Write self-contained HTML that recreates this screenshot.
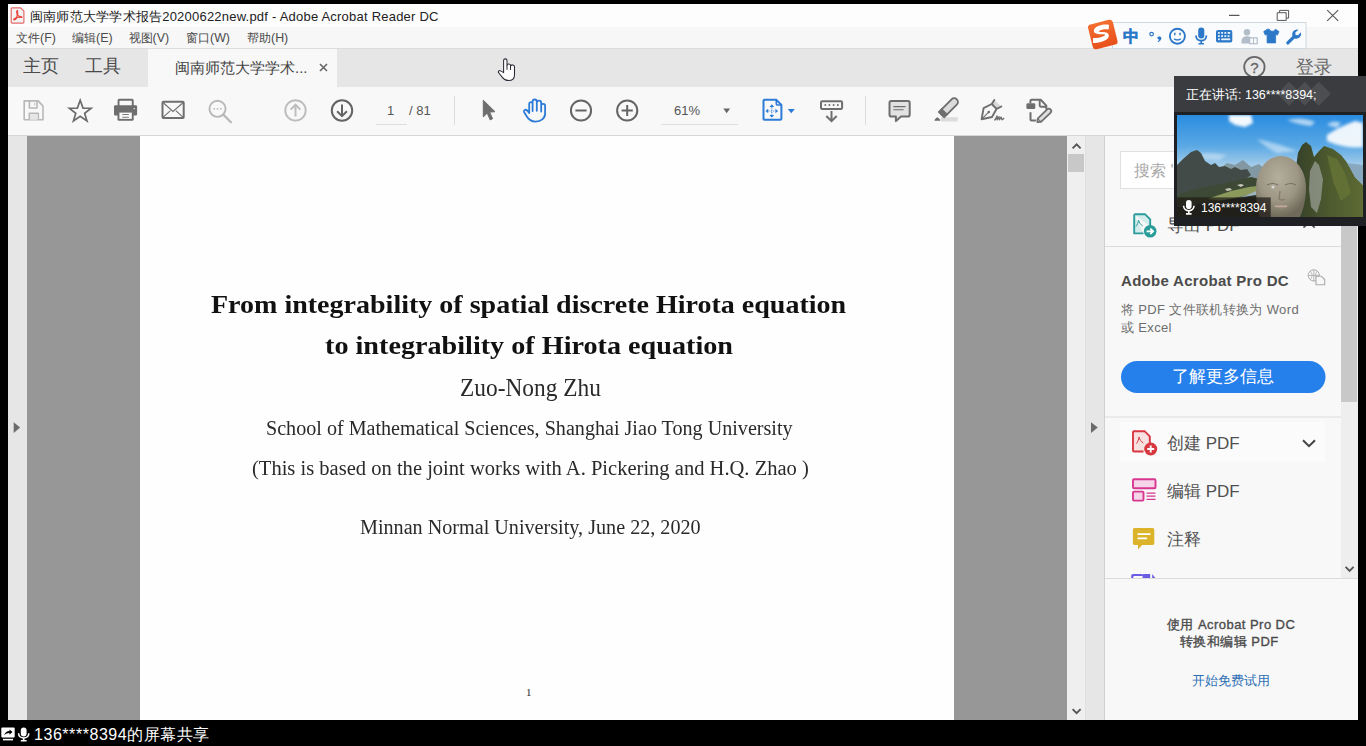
<!DOCTYPE html>
<html><head><meta charset="utf-8">
<style>
*{margin:0;padding:0;box-sizing:border-box}
html,body{width:1366px;height:746px;overflow:hidden;background:#000;font-family:"Liberation Sans",sans-serif;}
.a{position:absolute}
.t{position:absolute;white-space:nowrap;line-height:1}
svg{position:absolute;overflow:visible}
.serif{font-family:"Liberation Serif",serif;color:#1a1a1a}
</style></head><body>
<!-- title bar -->
<div class="a" style="left:8px;top:4px;width:1350px;height:23px;background:#fdfdfd"></div>
<!-- menu bar -->
<div class="a" style="left:8px;top:27px;width:1350px;height:21px;background:#f7f7f7"></div>
<!-- tab bar -->
<div class="a" style="left:8px;top:48px;width:1350px;height:1px;background:#dcdcdc"></div>
<div class="a" style="left:8px;top:49px;width:1350px;height:38px;background:#e6e6e6"></div>
<div class="a" style="left:148px;top:49px;width:189px;height:38px;background:#f8f8f8"></div>
<!-- title text -->
<svg style="left:0;top:0" width="30" height="30" viewBox="0 0 30 30"><path d="M12.2 7.8h8.4l3.3 3.3v11a1 1 0 0 1-1 1H12.2a1 1 0 0 1-1-1V8.8a1 1 0 0 1 1-1z" fill="#f3f3f3" stroke="#e46a6a" stroke-width="1.2"/><path d="M17.4 10.6c-.9 0-1 1.2-.4 3.2.5 1.6.3 2.6-.6 3.6-.8.9-2 1.2-2.6 1.8-.4.4.1.9.9.6 1-.4 1.6-1.4 2.6-2.2.9-.7 1.9-.6 3-.2.9.3 1.9.2 1.7-.4-.2-.5-1.2-.5-2.3-.6-1-.1-1.7-.8-2-2-.3-1.3.3-3.8-.3-3.8z" fill="none" stroke="#e8453c" stroke-width="1.1"/></svg>
<div class="t" style="left:30px;top:9.5px;font-size:13px;color:#222;letter-spacing:.22px">闽南师范大学学术报告20200622new.pdf - Adobe Acrobat Reader DC</div>
<!-- menu -->
<div class="t" style="left:16px;top:31.5px;font-size:12.4px;color:#4a4a4a">文件(F)</div>
<div class="t" style="left:72px;top:31.5px;font-size:12.4px;color:#4a4a4a">编辑(E)</div>
<div class="t" style="left:128.5px;top:31.5px;font-size:12.4px;color:#4a4a4a">视图(V)</div>
<div class="t" style="left:186px;top:31.5px;font-size:12.4px;color:#4a4a4a">窗口(W)</div>
<div class="t" style="left:247px;top:31.5px;font-size:12.4px;color:#4a4a4a">帮助(H)</div>
<!-- tabs -->
<div class="t" style="left:22.5px;top:57.6px;font-size:17.6px;color:#4a4a4a">主页</div>
<div class="t" style="left:84.5px;top:57.6px;font-size:17.6px;color:#4a4a4a">工具</div>
<div class="t" style="left:175px;top:60px;font-size:15px;color:#444">闽南师范大学学术...</div>
<svg style="left:319px;top:63px" width="9" height="9" viewBox="0 0 9 9"><path d="M1 1l7 7M8 1l-7 7" stroke="#666" stroke-width="1.6"/></svg>
<!-- cursor -->
<svg style="left:0;top:0" width="600" height="90" viewBox="0 0 600 90">
 <path d="M503.6 71.8V60.6A1.7 1.7 0 0 1 507 60.6V65.6A1.75 1.75 0 0 1 510.5 66V66.6A1.75 1.75 0 0 1 514.5 67.2V75C514.5 78.5 512 80.5 508.5 80.5C505.5 80.5 504 79.5 502.5 77.6L498.9 73A1.3 1.3 0 0 1 500.6 70.9L503.6 72.6z" fill="#fff" stroke="#2a2a35" stroke-width="1.05" stroke-linejoin="round"/>
 <path d="M507 65.6v4.2M510.5 66.4v3.6" stroke="#2a2a35" stroke-width="1"/>
</svg>
<!-- toolbar -->
<div class="a" style="left:8px;top:87px;width:1350px;height:48px;background:#f8f8f8"></div>
<div class="a" style="left:8px;top:135px;width:1350px;height:1px;background:#d6d6d6"></div>
<!-- window controls -->
<svg style="left:0;top:0" width="1366" height="50" viewBox="0 0 1366 50">
 <rect x="1229" y="14.8" width="10.5" height="1.1" fill="#444"/>
 <path d="M1277.2 12.7h9v7.7h-9z" fill="#fdfdfd" stroke="#555" stroke-width="1"/>
 <path d="M1279.6 12.7v-2.3h9v7.7h-2.4" fill="none" stroke="#555" stroke-width="1"/>
 <path d="M1327.2 10.2l11 10.6M1338.2 10.2l-11 10.6" stroke="#555" stroke-width="1.1"/>
 <!-- sogou bar -->
 <rect x="1112.5" y="22.5" width="193.5" height="26" fill="#f9fbfd" stroke="#cfd7e0" stroke-width="1"/>
 <defs><linearGradient id="sg" x1="0" y1="0" x2="0" y2="1"><stop offset="0" stop-color="#f46d2f"/><stop offset="1" stop-color="#e9501b"/></linearGradient></defs>
 <g transform="translate(1102.8 34.5) rotate(-14) scale(1.08)">
  <rect x="-11.8" y="-11.8" width="23.6" height="23.6" rx="3" fill="url(#sg)"/>
  <path d="M7.8 -7.2c-4-2-11.5-2.4-14.3 .6c-2.6 3 1 5.2 5.8 6.2c3.4.7 3.6 1.6.2 2.1c-2.8.5-6.6.1-9-.7l-1.2 4.4c3.4 1.2 9.4 1.4 12.6.1c4.8-1.9 4.6-6.3-1.2-7.7c-3-.7-4.3-1.1-3.2-1.8c1.6-.9 6.2-.3 8.8.8z" fill="#fff"/>
 </g>
 <text x="1122.8" y="42" font-family="Liberation Sans" font-size="15.5" font-weight="bold" fill="#2b78c8" stroke="#2b78c8" stroke-width=".4">中</text>
 <circle cx="1151.6" cy="34.1" r="1.8" fill="none" stroke="#2b78c8" stroke-width="1.2"/>
 <path d="M1159.3 36.6c1.9 0 2.4 1.1 1.9 2.5-.5 1.4-1.6 2.5-3 3.1l-.5-.8c.8-.5 1.3-1.1 1.5-1.8-1.1-.1-1.8-.8-1.8-1.6 0-.9.8-1.4 1.9-1.4z" fill="#2b78c8"/>
 <circle cx="1177.4" cy="36.2" r="7.5" fill="none" stroke="#2b78c8" stroke-width="1.9"/>
 <rect x="1174.1" y="32.5" width="1.4" height="3" rx=".7" fill="#2b78c8"/><rect x="1179.3" y="32.5" width="1.4" height="3" rx=".7" fill="#2b78c8"/>
 <path d="M1174 38.8c1.8 1.6 5 1.6 6.8 0" fill="none" stroke="#2b78c8" stroke-width="1.3"/>
 <rect x="1198.2" y="27.6" width="6.1" height="11" rx="3" fill="#2b78c8"/>
 <path d="M1196 35.4c0 3.3 2.3 5.2 5.2 5.2s5.2-1.9 5.2-5.2" fill="none" stroke="#2b78c8" stroke-width="1.8"/>
 <path d="M1201.2 40.6v2.6M1198.5 43.8h5.4" stroke="#2b78c8" stroke-width="1.6"/>
 <rect x="1216" y="29.9" width="16.3" height="12.6" rx="2" fill="#2b78c8"/>
 <g fill="#e8f0fa"><rect x="1218" y="32" width="1.8" height="1.8"/><rect x="1221.2" y="32" width="1.8" height="1.8"/><rect x="1224.4" y="32" width="1.8" height="1.8"/><rect x="1227.6" y="32" width="2.6" height="1.8"/>
 <rect x="1218" y="35.2" width="1.8" height="1.8"/><rect x="1221.2" y="35.2" width="1.8" height="1.8"/><rect x="1224.4" y="35.2" width="1.8" height="1.8"/><rect x="1227.6" y="35.2" width="1.8" height="1.8"/>
 <rect x="1218" y="38.4" width="1.8" height="1.8"/><rect x="1221.2" y="38.4" width="9" height="1.8"/></g>
 <circle cx="1247" cy="32.3" r="3.2" fill="#b3bdc9"/>
 <path d="M1241.5 41.5c0-3.5 2.2-5.3 5.5-5.3s5.5 1.8 5.5 5.3v2h-11z" fill="#b3bdc9"/>
 <rect x="1249.7" y="37.9" width="7.5" height="5.8" fill="#f9fbfd" stroke="#b3bdc9" stroke-width="1.2"/>
 <path d="M1253.5 38v6" stroke="#b3bdc9" stroke-width="1"/>
 <path d="M1267.4 29.2l-3.7 2.4 1.6 3.5 1.8-.7v8.5h8.5v-8.5l1.8.7 1.6-3.5-3.7-2.4c-.6 1.4-1.6 2-3 2s-2.4-.6-3-2z" fill="#2b78c8" stroke="#2b78c8" stroke-width=".8" stroke-linejoin="round"/>
 <path d="M1298.5 29.8a5 5 0 0 0-6.2 6.4l-5.6 5.6a1.6 1.6 0 0 0 2.3 2.3l5.6-5.6a5 5 0 0 0 6.4-6.2l-2.9 2.9-2.5-.2-.3-2.5z" fill="#2b78c8"/>
</svg>
<svg style="left:0;top:0" width="1366" height="90" viewBox="0 0 1366 90">
 <circle cx="1254.4" cy="67" r="10.2" fill="none" stroke="#666" stroke-width="1.8"/>
 <text x="1254.4" y="73" text-anchor="middle" font-family="Liberation Sans" font-size="15" fill="#666" stroke="#666" stroke-width=".3">?</text>
</svg>
<div class="t" style="left:1296px;top:58px;font-size:18px;color:#666">登录</div>
<!-- toolbar texts -->
<div class="t" style="left:387px;top:104px;font-size:13px;color:#555">1</div>
<div class="t" style="left:409px;top:104px;font-size:13px;color:#555">/ 81</div>
<div class="t" style="left:674px;top:104px;font-size:13px;color:#555">61%</div>
<!-- toolbar icons -->
<svg style="left:0;top:0" width="1366" height="136" viewBox="0 0 1366 136">
 <!-- save -->
 <g fill="none" stroke="#b8b8b8" stroke-width="1.6" stroke-linejoin="round">
  <path d="M24.2 100.9h14l4.8 5.2v13.7h-18.8z"/>
  <path d="M29.4 100.9v7.1h7.6v-7.1"/>
  <path d="M29.3 119.8v-6.6h9v6.6"/>
 </g>
 <rect x="30" y="114" width="7.6" height="5.8" fill="#e6e6e6"/>
 <rect x="34" y="102.8" width="1.2" height="2.6" fill="#c8c8c8"/>
 <!-- star -->
 <path transform="translate(80.2 110.5) scale(.94) translate(-80.2 -110.5)" d="M80.2 99.6l3 8.3 8.6.2-6.9 5.3 2.5 8.3-7.2-5-7.2 5 2.5-8.3-6.9-5.3 8.6-.2z" fill="none" stroke="#6b6b6b" stroke-width="1.8" stroke-linejoin="miter"/>
 <!-- printer -->
 <g fill="#6e6e6e">
  <path d="M117.6 106v-5.6a1.6 1.6 0 0 1 1.6-1.6h12.9a1.6 1.6 0 0 1 1.6 1.6v5.6h-1.9v-5.3h-12.3v5.3z"/>
  <path d="M115.3 105.3h20.5a1.3 1.3 0 0 1 1.3 1.3v7.6a1.3 1.3 0 0 1-1.3 1.3h-2.1v4.1a1.1 1.1 0 0 1-1.1 1.1h-14a1.1 1.1 0 0 1-1.1-1.1v-4.1h-2.2a1.3 1.3 0 0 1-1.3-1.3v-7.6a1.3 1.3 0 0 1 1.3-1.3z"/>
 </g>
 <rect x="119.4" y="112.6" width="12.4" height="6.3" fill="#f8f8f8"/>
 <rect x="122.3" y="114" width="6.6" height=".9" fill="#6e6e6e"/>
 <rect x="122.3" y="116.8" width="6.6" height=".9" fill="#6e6e6e"/>
 <rect x="133.5" y="108" width="1.4" height="1.2" fill="#ddd"/>
 <!-- mail -->
 <rect x="162.5" y="101.7" width="21.2" height="16.4" rx="1" fill="none" stroke="#6e6e6e" stroke-width="2"/>
 <path d="M163 102.5l10 9 10.2-9M163 117.3l7.4-6.6M183.2 117.3l-7.4-6.6" fill="none" stroke="#6e6e6e" stroke-width="1.1"/>
 <!-- search -->
 <circle cx="217.5" cy="108.8" r="8.1" fill="none" stroke="#b8b8b8" stroke-width="1.9"/>
 <path d="M223.3 114.6l7.6 7.6" stroke="#b8b8b8" stroke-width="2.2" stroke-linecap="round"/>
 <circle cx="214.2" cy="108.8" r=".9" fill="#b8b8b8"/><circle cx="217.5" cy="108.8" r=".9" fill="#b8b8b8"/><circle cx="220.8" cy="108.8" r=".9" fill="#b8b8b8"/>
 <!-- up/down -->
 <circle cx="295.5" cy="110.4" r="10.2" fill="none" stroke="#bdbdbd" stroke-width="1.9"/>
 <path d="M295.5 116.5v-11.5M290.6 109.6l4.9-4.9 4.9 4.9" fill="none" stroke="#bdbdbd" stroke-width="2"/>
 <circle cx="342" cy="110.5" r="10.2" fill="none" stroke="#646464" stroke-width="2"/>
 <path d="M342 104.5v11.5M337.1 111.3l4.9 4.9 4.9-4.9" fill="none" stroke="#646464" stroke-width="2"/>
 <!-- page underline + separators -->
 <rect x="376" y="124" width="31" height="1" fill="#dedede"/>
 <rect x="454" y="96" width="1" height="29" fill="#dcdcdc"/>
 <rect x="661" y="124" width="77" height="1" fill="#dedede"/>
 <rect x="865" y="96" width="1" height="29" fill="#dcdcdc"/>
 <!-- arrow -->
 <path d="M483.3 100.2L495 111.7l-5.4.4 3 6.6-2.4 1.2-3-6.8-3.9 3.9z" fill="#6e6e6e" stroke="#6e6e6e" stroke-width="1" stroke-linejoin="round"/>
 <!-- hand -->
 <path d="M529.2 113V103.8A1.7 1.7 0 0 1 532.6 103.8V111M532.6 103.8V101.6A2.1 2.1 0 0 1 536.8 101.6V110.8M536.8 102.9A2.2 2.2 0 0 1 541.2 102.9V111.5M541.2 105.85A1.95 1.95 0 0 1 545.1 105.85V113.5C545.1 118.5 541 121.6 535.5 121.6C531 121.6 528.5 119.5 526.5 116L524.2 112.3A1.7 1.7 0 0 1 527 110.4L529.2 113" fill="none" stroke="#2c7bd6" stroke-width="1.8" stroke-linecap="round" stroke-linejoin="round"/>
 <!-- minus/plus -->
 <circle cx="581" cy="110.5" r="10.1" fill="none" stroke="#646464" stroke-width="2"/>
 <path d="M575.4 110.5h11.2" stroke="#646464" stroke-width="2"/>
 <circle cx="627.2" cy="110.5" r="10.1" fill="none" stroke="#646464" stroke-width="2"/>
 <path d="M621.6 110.5h11.2M627.2 104.9v11.2" stroke="#646464" stroke-width="2"/>
 <!-- zoom dropdown -->
 <path d="M723.3 108.6h6.8l-3.4 4.6z" fill="#666"/>
 <!-- fit page -->
 <path d="M764.6 99.7h11.6l5.2 5.2v13.8a1.1 1.1 0 0 1-1.1 1.1h-15.7a1.1 1.1 0 0 1-1.1-1.1v-17.9a1.1 1.1 0 0 1 1.1-1.1z" fill="none" stroke="#2c7bd6" stroke-width="2" stroke-linejoin="round"/>
 <path d="M776.3 100v3.8a1.2 1.2 0 0 0 1.2 1.2h3.9" fill="none" stroke="#2c7bd6" stroke-width="1.6"/>
 <path d="M771.8 104.3l-2.3 2.7h4.6zM771.8 117.7l-2.3-2.7h4.6zM765.5 111l2.7-2.3v4.6zM778.1 111l-2.7-2.3v4.6z" fill="#2c7bd6"/>
 <path d="M771.8 107v8M768.2 111h7.2" stroke="#2c7bd6" stroke-width="1.2" stroke-dasharray="1.4 1" opacity=".75"/>
 <path d="M787.8 109h7l-3.5 4.2z" fill="#2c7bd6"/>
 <!-- keyboard download -->
 <rect x="821" y="101.2" width="21.1" height="7.8" rx="1.3" fill="none" stroke="#6e6e6e" stroke-width="2"/>
 <circle cx="825.3" cy="105.1" r="1" fill="#6e6e6e"/><circle cx="829.4" cy="105.1" r="1" fill="#6e6e6e"/><circle cx="833.6" cy="105.1" r="1" fill="#6e6e6e"/><circle cx="837.8" cy="105.1" r="1" fill="#6e6e6e"/>
 <path d="M831.5 111v10M826.3 116l5.2 5.2 5.2-5.2" fill="none" stroke="#6e6e6e" stroke-width="2"/>
 <!-- comment -->
 <path d="M891.3 101.1h16.6a1.8 1.8 0 0 1 1.8 1.8v11.8a1.8 1.8 0 0 1-1.8 1.8h-6.8l-5.2 4.6v-4.6h-4.6a1.8 1.8 0 0 1-1.8-1.8v-11.8a1.8 1.8 0 0 1 1.8-1.8z" fill="#e2e2e2" stroke="#6e6e6e" stroke-width="2" stroke-linejoin="round"/>
 <path d="M893.4 106.6h12.2M893.4 109.8h10.2" stroke="#6e6e6e" stroke-width="1.1"/>
 <!-- highlighter -->
 <rect x="941" y="117.2" width="16.6" height="4.3" fill="#dcdcdc"/>
 <g transform="translate(941.6 114.6) rotate(-45)">
  <rect x="0" y="-3.7" width="21.5" height="7.4" rx="3.7" fill="#dcdcdc" stroke="#6e6e6e" stroke-width="1.9"/>
  <rect x="-1" y="-4.6" width="5.6" height="9.2" fill="#6e6e6e"/>
 </g>
 <path d="M934.4 120.7c.4-1.6 1.8-3.2 3.2-3.4l2.8 2.8-.3.6z" fill="#6e6e6e"/>
 <!-- pen sign -->
 <path d="M994.3 100l7.1 6.5-4.9 1.9-4.7-4.9z" fill="#dadada"/>
 <path d="M994.3 100l-2.5 3.9M991.8 104l4.7 4.9 4.9-2.4" fill="none" stroke="#6e6e6e" stroke-width="1.9" stroke-linecap="round" stroke-linejoin="round"/>
 <path d="M991.8 104L983.6 108.2 981.6 119.2 992 117 996.5 109" fill="none" stroke="#6e6e6e" stroke-width="1.9" stroke-linejoin="round"/>
 <path d="M982 118.8l6.6-6.6" stroke="#6e6e6e" stroke-width="1.1"/>
 <circle cx="988.8" cy="112.1" r="1.3" fill="#6e6e6e"/>
 <path d="M994.8 120c.9-1.2 1.6-2.6 2.2-4.1.3 1.4.2 2.8.1 3.8.8-.9 1.4-2 1.9-3 .1 1 .2 2 .4 3 .7-1 1.2-1.8 1.7-2.6.2 1 .4 1.9 1 2.6.6-.2 1.2-.8 1.6-1.4" fill="none" stroke="#6e6e6e" stroke-width="1.4" stroke-linecap="round" stroke-linejoin="round"/>
 <!-- edit doc -->
 <path d="M1030.4 103.2V101a1.2 1.2 0 0 1 1.2-1.2h9.1l5.6 5.8v3.6" fill="none" stroke="#6e6e6e" stroke-width="2" stroke-linejoin="round"/>
 <path d="M1039.7 100.2v5.3a1.2 1.2 0 0 0 1.2 1.2h5.2" fill="none" stroke="#6e6e6e" stroke-width="1.9"/>
 <rect x="1026.4" y="103.3" width="8.9" height="5.8" rx="1.3" fill="#6e6e6e"/>
 <path d="M1030.5 112.2v7.2a1.1 1.1 0 0 0 1.1 1.1h4.3" fill="none" stroke="#6e6e6e" stroke-width="2"/>
 <g transform="translate(1037.3 122.2) rotate(-44)">
  <path d="M2.8 -2.4h13.2a2.4 2.4 0 0 1 0 4.8H2.8L0 0z" fill="#dedede" stroke="#6e6e6e" stroke-width="1.7" stroke-linejoin="round"/>
  <path d="M2.8 -2.3v4.6" stroke="#6e6e6e" stroke-width="1.1"/>
  <path d="M-.3 0l1.4-1v2z" fill="#6e6e6e"/>
 </g>
</svg>
<!-- content -->
<div class="a" style="left:8px;top:136px;width:19px;height:584px;background:#e6e6e6"></div>
<div class="a" style="left:27px;top:136px;width:1040px;height:584px;background:#979797"></div>
<div class="a" style="left:140px;top:136px;width:814px;height:584px;background:#fefefe"></div>
<!-- pdf text -->
<div class="t serif" style="left:211px;top:292px;font-size:25px;font-weight:bold;color:#111;transform:scaleX(1.121);transform-origin:0 0">From integrability of spatial discrete Hirota equation</div>
<div class="t serif" style="left:325px;top:332.5px;font-size:25px;font-weight:bold;color:#111;transform:scaleX(1.127);transform-origin:0 0">to integrability of Hirota equation</div>
<div class="t serif" style="left:459.5px;top:375.9px;font-size:24.5px;color:#2a2a2a;transform:scaleX(0.954);transform-origin:0 0">Zuo-Nong Zhu</div>
<div class="t serif" style="left:266px;top:417.6px;font-size:20.5px;color:#2a2a2a;transform:scaleX(0.981);transform-origin:0 0">School of Mathematical Sciences, Shanghai Jiao Tong University</div>
<div class="t serif" style="left:252px;top:457.8px;font-size:20.5px;color:#2a2a2a;transform:scaleX(1.002);transform-origin:0 0">(This is based on the joint works with A. Pickering and H.Q. Zhao )</div>
<div class="t serif" style="left:360px;top:516.8px;font-size:20.5px;color:#2a2a2a;transform:scaleX(0.983);transform-origin:0 0">Minnan Normal University, June 22, 2020</div>
<div class="t serif" style="left:526px;top:687px;font-size:11px;color:#2a2a2a">1</div>
<!-- main scrollbar -->
<div class="a" style="left:1067px;top:136px;width:18px;height:584px;background:#efefef"></div>
<div class="a" style="left:1068px;top:154px;width:16px;height:18px;background:#c8c8c8"></div>
<!-- right collapse strip -->
<div class="a" style="left:1085px;top:136px;width:19px;height:584px;background:#e6e6e6"></div>
<div class="a" style="left:1104px;top:136px;width:1px;height:584px;background:#cfcfcf"></div>
<div class="a" style="left:1085px;top:136px;width:1px;height:584px;background:#e0e0e0"></div>
<!-- right panel -->
<div class="a" style="left:1105px;top:136px;width:236px;height:584px;background:#f8f8f8"></div>
<div class="a" style="left:1341px;top:136px;width:17px;height:442px;background:#eeeeee"></div>
<div class="a" style="left:1341px;top:136px;width:16px;height:266px;background:#c8c8c8"></div>
<!-- right panel content -->
<div class="a" style="left:1120px;top:422px;width:205px;height:40px;background:#fbfbfb;border-radius:3px"></div>
<div class="a" style="left:1120px;top:151px;width:240px;height:38px;background:#fff;border:1px solid #e0e0e0"></div>
<div class="t" style="left:1134px;top:163px;font-size:16px;color:#a8a8a8">搜索 '导出</div>
<svg style="left:1105px;top:136px" width="236" height="584" viewBox="1105 136 236 584">
 <!-- export pdf icon -->
 <path d="M1134.2 214.3h11l5 5v7.5M1143.5 233.4h-9.3v-19.1" fill="#d4ecec" stroke="#2a9d9b" stroke-width="1.9" stroke-linejoin="round"/>
 <path d="M1138.5 220c.6 2.5 2 4.6 4.3 6M1138.5 220c-.2 2.6-1.3 5-2.6 6.6" fill="none" stroke="#2a9d9b" stroke-width="1"/>
 <circle cx="1150.2" cy="231.3" r="6.3" fill="#2a9d9b"/>
 <path d="M1146.6 231.3h6M1150.3 228.6l2.8 2.7-2.8 2.7" fill="none" stroke="#fff" stroke-width="1.8"/>
 <path d="M1303.5 227.6l5.6-5.2 5.6 5.2" fill="none" stroke="#555" stroke-width="1.8"/>
 <rect x="1105" y="246" width="236" height="1" fill="#dcdcdc"/>
 <!-- globe doc icon -->
 <circle cx="1313.8" cy="275.4" r="5.6" fill="none" stroke="#aaa" stroke-width="1"/>
 <path d="M1308.3 275.4h11M1313.8 269.8v11.2M1310.5 271.2c2 2.6 2 5.8 0 8.4M1317.1 271.2c-2 2.6-2 5.8 0 8.4" fill="none" stroke="#aaa" stroke-width=".8"/>
 <path d="M1316 276.3h5.5l3.2 3.2v5.2h-8.7z" fill="#f8f8f8" stroke="#aaa" stroke-width="1.1" stroke-linejoin="round"/>
 <!-- button -->
 <rect x="1121" y="361" width="204.5" height="32" rx="16" fill="#2680eb"/>
 <rect x="1105" y="416.5" width="236" height="1" fill="#dcdcdc"/>
 <!-- create pdf icon -->
 <path d="M1143.5 451.5h-9.5a1 1 0 0 1-1-1v-18.2a1 1 0 0 1 1-1h10.8l5 5v7" fill="#f9e0e1" stroke="#d7373f" stroke-width="1.9" stroke-linejoin="round"/>
 <path d="M1139 437c.6 2.5 2 4.6 4.3 6M1139 437c-.2 2.6-1.3 5-2.6 6.6" fill="none" stroke="#d7373f" stroke-width="1"/>
 <circle cx="1150.7" cy="449" r="6.5" fill="#d7373f"/>
 <path d="M1147.2 449h7M1150.7 445.5v7" stroke="#fff" stroke-width="1.9"/>
 <path d="M1303 440.2l6 6 6-6" fill="none" stroke="#444" stroke-width="2"/>
 <!-- edit pdf icon -->
 <rect x="1133" y="479.2" width="22.5" height="9" rx="1" fill="#f5d6e8" stroke="#d83790" stroke-width="1.9"/>
 <rect x="1133" y="491.6" width="10.5" height="9" rx="1" fill="#f5d6e8" stroke="#d83790" stroke-width="1.9"/>
 <path d="M1146.5 493.2h9M1146.5 496.2h9M1146.5 499.3h9" stroke="#d83790" stroke-width="1.2"/>
 <!-- comment icon -->
 <path d="M1134.5 528h18.2a1.6 1.6 0 0 1 1.6 1.6v13.7a1.6 1.6 0 0 1-1.6 1.6h-10.5l-4.2 4.5v-4.5h-3.5a1.6 1.6 0 0 1-1.6-1.6v-13.7a1.6 1.6 0 0 1 1.6-1.6z" fill="#dcb42c"/>
 <path d="M1137.5 534.2h13M1137.5 538.3h9.5" stroke="#fff" stroke-width="1.8"/>
 <!-- partial purple icon -->
 <path d="M1131.2 578.4v-2.6a1.8 1.8 0 0 1 1.8-1.8h8.8l2 2h-9.6a.9.9 0 0 0-.9.9v1.5z" fill="#6b5ce6"/><rect x="1142.6" y="574" width="7.6" height="4.4" fill="#6b5ce6"/><path d="M1152.2 574l3.4 4.4h-3.4z" fill="#6b5ce6"/>
 <rect x="1105" y="578" width="236" height="1" fill="#dcdcdc"/>
</svg>
<div class="t" style="left:1167px;top:216.5px;font-size:17px;color:#505050">导出 PDF</div>
<div class="t" style="left:1121px;top:273px;font-size:15px;font-weight:bold;color:#4b4b4b;letter-spacing:.3px">Adobe Acrobat Pro DC</div>
<div class="t" style="left:1121px;top:302.5px;font-size:13px;color:#6e6e6e;letter-spacing:.35px">将 PDF 文件联机转换为 Word</div>
<div class="t" style="left:1121px;top:321px;font-size:13px;color:#6e6e6e;letter-spacing:.35px">或 Excel</div>
<div class="t" style="left:1172px;top:368px;font-size:17px;color:#fff">了解更多信息</div>
<div class="t" style="left:1167px;top:434.5px;font-size:17px;color:#505050">创建 PDF</div>
<div class="t" style="left:1167px;top:483px;font-size:17px;color:#505050">编辑 PDF</div>
<div class="t" style="left:1167px;top:531px;font-size:17px;color:#505050">注释</div>
<div class="a" style="left:1105px;top:578px;width:253px;height:1px;background:#dcdcdc"></div><div class="a" style="left:1105px;top:579px;width:253px;height:141px;background:#f8f8f8"></div>
<div class="t" style="left:1167px;top:618px;font-size:13px;color:#4b4b4b;-webkit-text-stroke:.35px #4b4b4b;letter-spacing:.45px">使用 Acrobat Pro DC</div>
<div class="t" style="left:1180px;top:635px;font-size:13px;color:#4b4b4b;-webkit-text-stroke:.35px #4b4b4b;letter-spacing:.45px">转换和编辑 PDF</div>
<div class="t" style="left:1191.5px;top:674px;font-size:13px;color:#2d6fb5">开始免费试用</div>
<!-- bottom black bar is body bg -->
<svg style="left:0;top:0" width="1366" height="746" viewBox="0 0 1366 746">
 <path d="M1345.6 566.8l4 4 4-4" fill="none" stroke="#555" stroke-width="1.9"/>
 <path d="M1072.6 148.3l4-4 4 4" fill="none" stroke="#555" stroke-width="1.9"/>
 <path d="M1072.6 709.2l4 4 4-4" fill="none" stroke="#555" stroke-width="1.9"/>
 <path d="M13.7 422.3l6.4 5.3-6.4 5.3z" fill="#6a6a6a"/>
 <path d="M1091 422.3l6.8 5.3-6.8 5.3z" fill="#6a6a6a"/>
 <!-- share icon -->
 <rect x="1.3" y="727.6" width="13.4" height="10" rx="1" fill="#fff"/>
 <path d="M4.2 735.3c.6-2.6 2.6-4.2 5.3-4.2v-1.6l3 2.6-3 2.6v-1.6c-2.2 0-3.8.8-5.3 2.2z" fill="#000"/>
 <rect x="3" y="738.8" width="10" height="1.6" fill="#fff"/>
 <!-- mic -->
 <rect x="20.8" y="727.5" width="5.8" height="9" rx="2.9" fill="#fff"/>
 <path d="M18.6 733.2c0 3 2.3 4.8 5.1 4.8s5.1-1.8 5.1-4.8" fill="none" stroke="#fff" stroke-width="1.6"/>
 <path d="M23.7 738v2.4M20.8 740.8h5.8" stroke="#fff" stroke-width="1.6"/>
</svg>
<div class="t" style="left:34px;top:726.5px;font-size:16px;color:#fff;letter-spacing:.55px">136****8394的屏幕共享</div>
<!-- overlay -->
<div class="a" style="left:1174px;top:76px;width:192px;height:36px;background:#3a3c40"></div>
<div class="a" style="left:1174px;top:112px;width:192px;height:113.5px;background:#1f2023"></div>
<svg style="left:1174px;top:76px" width="192" height="36" viewBox="0 0 192 36">
 <g fill="#fff" opacity=".09">
  <path d="M103 17.7l12-12 12 12-12 12z"/><path d="M118.7 17.7l12-12 12 12-12 12z"/><path d="M132.8 17.7l12-12 12 12-12 12z"/>
 </g>
</svg>
<div class="t" style="left:1186px;top:88.5px;font-size:12.5px;color:#fff">正在讲话: 136****8394;</div>
<svg style="left:1177px;top:115px;overflow:hidden" width="186" height="102" viewBox="0 0 186 102">
 <defs>
  <linearGradient id="sky" x1="0" y1="0" x2="0" y2="1">
   <stop offset="0" stop-color="#2a8ce0"/><stop offset=".3" stop-color="#5aa8e4"/><stop offset=".5" stop-color="#a6cdea"/><stop offset=".62" stop-color="#c6dcea"/><stop offset="1" stop-color="#c6dcea"/>
  </linearGradient>
  <filter id="bl" x="-30%" y="-50%" width="160%" height="200%"><feGaussianBlur stdDeviation="1.8"/></filter>
  <filter id="bl2" x="-10%" y="-10%" width="120%" height="120%"><feGaussianBlur stdDeviation=".6"/></filter>
  <radialGradient id="head" cx=".45" cy=".35" r=".65"><stop offset="0" stop-color="#b4ae9e"/><stop offset=".6" stop-color="#9d9684"/><stop offset="1" stop-color="#6f6a5a"/></radialGradient>
  <linearGradient id="cliff" x1="0" y1="0" x2="1" y2="0"><stop offset="0" stop-color="#34402a"/><stop offset=".5" stop-color="#4d5a2e"/><stop offset="1" stop-color="#5e6a34"/></linearGradient>
 </defs>
 <rect width="186" height="102" fill="url(#sky)"/>
 <g fill="#fff" filter="url(#bl)">
  <path d="M52 0h22l2 8-8 4-10-2-6-4z" opacity=".95"/>
  <path d="M110 5q15-4 28 2l-4 4q-12-1-24-6z" opacity=".6"/>
  <path d="M150 20q12-8 28-14l8 2v24q-18 2-36-6z" opacity=".9"/>
  <path d="M80 24q20 4 40 12l-20 2q-12-6-20-14z" opacity=".45"/>
  <path d="M10 40q20-4 40 0l-8 5q-16 0-32-5z" opacity=".35"/>
  <path d="M150 10q6-6 14-2l-4 5z" opacity=".6"/>
 </g>
 <g filter="url(#bl2)">
  <path d="M40 56L50 48 58 50 66 45 74 52 82 49 90 56 92 64 40 64z" fill="#8299a4"/>
  <path d="M0 50L6 44 14 37 20 35 24 38 28 46 34 50 38 48 42 52 48 51 54 54 58 52 64 55 70 54 74 60 66 66 54 70 40 74 20 78 0 80z" fill="#424c46"/>
  <path d="M0 80L20 74 40 70 58 66 74 62 90 66 90 80 60 84 30 88 0 92z" fill="#3e4a34"/>
  <path d="M30 84L54 76 72 72 88 70 92 74 70 80 46 86z" fill="#8b9a5c"/>
  <path d="M44 88L70 80 84 74 92 72 92 76 74 84 52 92z" fill="#9eb3c0"/>
  <path d="M0 92L40 86 92 78 92 102 0 102z" fill="#2b2f26"/>
  <path d="M60 70l4-1 3 1-3 2zM48 74l5-1 2 2-5 1z" fill="#c9c8b8"/>
  <path d="M118 102L119 52 121 38 125 30 129 27 134 31 137 42 142 36 147 31 156 34 164 40 172 50 178 62 186 70 186 102z" fill="url(#cliff)"/>
  <path d="M133 56L138 46 142 50 146 64 144 84 140 98 134 92 132 74z" fill="#9a9e94" opacity=".75"/>
  <path d="M170 48L186 50 186 70 178 62z" fill="#88a8bf"/>
  <path d="M150 40l10 4 8 14 6 20-10 8-8-20z" fill="#667436" opacity=".8"/>
 </g>
 <path d="M104 41c14 0 25 14 25 32 0 12-3 22-6 29h-40c-3-7-4-17-4-29 0-18 11-32 25-32z" fill="url(#head)" filter="url(#bl2)"/>
 <g filter="url(#bl2)" opacity=".8">
  <path d="M90 70q6-3 11 0M108 70q6-3 11 0" stroke="#6a665a" stroke-width="1.2" fill="none"/>
  <circle cx="96" cy="72" r="1.6" fill="#dfe4e6"/>
  <path d="M103 76l-1 8q3 2 6 0" stroke="#7a7264" stroke-width="1.3" fill="none"/>
  <path d="M96 91q8-3 16 0q-8 5-16 0z" fill="#a98e82"/>
  <path d="M98 91.2h12" stroke="#ded6cc" stroke-width=".8"/>
 </g>
 <rect x="0" y="82.4" width="93.7" height="19.6" fill="#1e1a16" opacity=".72"/>
 <rect x="9" y="85" width="5.6" height="9" rx="2.8" fill="#fff"/>
 <path d="M6.6 90.8c0 3 2.4 4.9 5.2 4.9s5.2-1.9 5.2-4.9" fill="none" stroke="#fff" stroke-width="1.6"/>
 <path d="M11.8 95.7v2.9M9 98.9h5.6" stroke="#fff" stroke-width="1.6"/>
</svg>
<div class="t" style="left:1201px;top:202px;font-size:12px;color:#fff">136****8394</div>
</body></html>
